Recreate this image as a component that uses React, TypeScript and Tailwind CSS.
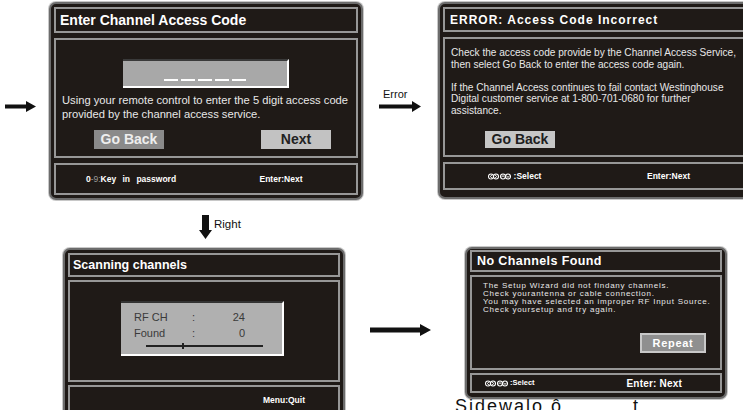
import React from "react"

type Box = { className?: string; children?: React.ReactNode }

function Frame({ className = "", children }: Box) {
  return (
    <div
      className={`absolute flex flex-col rounded-[7px] border-2 border-[#6c6c6c] bg-[#1f1a17] shadow-[0_0_0_1px_#c8c8c8] ${className}`}
    >
      {children}
    </div>
  )
}

function Section({ className = "", children }: Box) {
  return <div className={`shrink-0 border-2 border-[#979797] ${className}`}>{children}</div>
}

function NavKeys() {
  return (
    <svg width="23" height="7" viewBox="0 0 23 7" className="shrink-0">
      {[3, 8, 15, 20].map((cx) => (
        <circle key={cx} cx={cx} cy={3.5} r={2.5} fill="none" stroke="#fff" strokeWidth={1.1} />
      ))}
      <path d="M4 2 L2.2 3.5 L4 5" fill="none" stroke="#fff" strokeWidth={0.9} />
      <path d="M7 2 L8.8 3.5 L7 5" fill="none" stroke="#fff" strokeWidth={0.9} />
      <path d="M13.5 4.3 L15 2.5 L16.5 4.3" fill="none" stroke="#fff" strokeWidth={0.9} />
      <path d="M18.5 2.7 L20 4.5 L21.5 2.7" fill="none" stroke="#fff" strokeWidth={0.9} />
    </svg>
  )
}

function Arrow({ className, w, h, points }: { className: string; w: number; h: number; points: string }) {
  return (
    <svg width={w} height={h} viewBox={`0 0 ${w} ${h}`} className={`absolute ${className}`}>
      <polygon points={points} fill="#111" />
    </svg>
  )
}

export default function App() {
  return (
    <div className="relative h-[410px] w-[743px] overflow-hidden bg-white font-['Liberation_Sans',Arial,sans-serif]">
      {/* Enter code */}
      <Arrow className="left-[5px] top-[101px]" w={31} h={11} points="0,3.5 21,3.5 21,0 31,5.5 21,11 21,7.5 0,7.5" />
      <Frame className="left-[49px] top-[2px] h-[198px] w-[314px] gap-[5px] p-[3px]">
        <Section className="flex h-[26px] items-center pl-[4px]">
          <span className="text-[14px] font-bold text-white">Enter Channel Access Code</span>
        </Section>
        <Section className="flex h-[120px] flex-col">
          <div className="mx-auto mt-[19px] flex h-[29px] w-[166px] items-end justify-center gap-[3px] border-t-2 border-r-2 border-b-2 border-t-[#3a3a3a] border-r-white border-b-white bg-[#a8a8a8] pb-[5px]">
            {[0, 1, 2, 3, 4].map((i) => (
              <span key={i} className="h-[2px] w-[14px] bg-white" />
            ))}
          </div>
          <p className="mt-[5px] pl-[6px] text-[11.2px] leading-[14px] whitespace-nowrap text-[#e8e8e8]">
            Using your remote control to enter the 5 digit access code
            <br />
            provided by the channel access service.
          </p>
          <div className="mt-[9px] flex pl-[38px]">
            <div className="flex h-[19px] w-[70px] items-center justify-center bg-[#8a8a8a] text-[14px] font-bold text-[#eeeeee]">
              Go Back
            </div>
            <div className="ml-[97px] flex h-[19px] w-[70px] items-center justify-center bg-[#c2c2c2] text-[14px] font-bold text-[#222]">
              Next
            </div>
          </div>
        </Section>
        <Section className="grid flex-1 grid-cols-2 items-center text-[8.5px] font-bold text-white">
          <span className="text-center [word-spacing:4px]">
            0<span className="font-normal text-[#9a9a9a]">-9:</span>Key in password
          </span>
          <span className="text-center">Enter:Next</span>
        </Section>
      </Frame>

      {/* Error */}
      <span className="absolute left-[383px] top-[86px] text-[11px] text-[#111]">Error</span>
      <Arrow className="left-[379px] top-[101px]" w={42} h={11} points="0,3.5 33,3.5 33,0 42,5.5 33,11 33,7.5 0,7.5" />
      <Frame className="left-[438px] top-[2px] h-[197px] w-[312px] gap-[5px] p-[3px]">
        <Section className="flex h-[25px] items-center pl-[5px]">
          <span className="text-[12px] font-bold tracking-[1px] text-white">ERROR: Access Code Incorrect</span>
        </Section>
        <Section className="flex h-[120px] flex-col pt-[8px] pl-[6px]">
          <p className="text-[10.1px] leading-[11.5px] whitespace-nowrap text-[#e8e8e8]">
            Check the access code provide by the Channel Access Service,
            <br />
            then select Go Back to enter the access code again.
            <br />
            <br />
            If the Channel Access continues to fail contact Westinghouse
            <br />
            Digital customer service at 1-800-701-0680 for further
            <br />
            assistance.
          </p>
          <div className="mt-[15px] ml-[34px] flex h-[17px] w-[70px] items-center justify-center bg-[#c6c6c6] text-[14px] font-bold text-[#1e1e1e]">
            Go Back
          </div>
        </Section>
        <Section className="grid h-[28px] grid-cols-2 items-center text-[8.5px] font-bold text-white">
          <span className="flex items-center justify-center gap-[3px] pr-[10px]">
            <NavKeys />
            :Select
          </span>
          <span className="text-center">Enter:Next</span>
        </Section>
      </Frame>

      {/* Right */}
      <Arrow className="left-[199px] top-[215px]" w={13} h={24} points="3,0 10,0 10,15 13,15 6.5,24 0,15 3,15" />
      <span className="absolute left-[214px] top-[216px] text-[11.5px] text-[#111]">Right</span>

      {/* Scanning */}
      <Frame className="left-[63px] top-[248px] h-[190px] w-[282px] gap-[3px] p-[3px]">
        <Section className="flex h-[24px] items-center pl-[3px]">
          <span className="text-[12.5px] font-bold text-white">Scanning channels</span>
        </Section>
        <Section className="flex h-[102px] flex-col">
          <div className="mt-[19px] ml-[51px] flex h-[55px] w-[163px] flex-col border-t-2 border-r-2 border-b-2 border-t-[#333] border-r-white border-b-white bg-[#b0b0b0] pt-[6px] pl-[13px] pr-[37px] text-[11px] leading-[16px] text-[#3a3a3a]">
            <div className="flex">
              <span className="w-[58px]">RF CH</span>
              <span>:</span>
              <span className="flex-1 text-right">24</span>
            </div>
            <div className="flex">
              <span className="w-[58px]">Found</span>
              <span>:</span>
              <span className="flex-1 text-right">0</span>
            </div>
            <div className="relative mt-[4px] ml-[12px] h-[1.5px] w-[117px] bg-[#222]">
              <span className="absolute left-[36px] top-[-2.5px] h-[6px] w-[2px] bg-[#222]" />
            </div>
          </div>
        </Section>
        <Section className="flex h-[40px] justify-end pt-[7px] pr-[33px]">
          <span className="text-[8.5px] font-bold text-white">Menu:Quit</span>
        </Section>
      </Frame>

      {/* No channels */}
      <Arrow className="left-[370px] top-[324px]" w={61} h={12} points="0,3.5 50,3.5 50,0 61,6 50,12 50,8.5 0,8.5" />
      <Frame className="left-[465px] top-[247px] h-[152px] w-[262px] gap-[3px] px-[3px] pt-[1px]">
        <Section className="flex h-[22px] items-center pl-[5px]">
          <span className="text-[12.5px] font-bold tracking-[0.4px] text-white">No Channels Found</span>
        </Section>
        <Section className="flex h-[95px] flex-col pt-[5px] pl-[11px]">
          <p className="text-[8px] leading-[8px] tracking-[0.75px] whitespace-nowrap text-[#e8e8e8]">
            The Setup Wizard did not findany channels.
            <br />
            Check yourantenna or cable connection.
            <br />
            You may have selected an improper RF Input Source.
            <br />
            Check yoursetup and try again.
          </p>
          <div className="mt-[19px] mr-[14px] flex h-[20px] w-[66px] items-center justify-center self-end border-2 border-[#c8c8c8] bg-[#8f8f8f] text-[11px] font-bold tracking-[0.7px] text-white">
            Repeat
          </div>
        </Section>
        <Section className="flex h-[20px] items-center justify-between pl-[13px] pr-[38px] font-bold text-white">
          <span className="flex items-center gap-[2px] text-[7.5px]">
            <NavKeys />
            :Select
          </span>
          <span className="text-[10px] tracking-[0.2px]">Enter: Next</span>
        </Section>
      </Frame>

      <span className="absolute left-[455px] top-[396px] text-[18px] leading-[20px] tracking-[2px] text-[#111]">Sidewalo ô ........ t</span>
    </div>
  )
}
